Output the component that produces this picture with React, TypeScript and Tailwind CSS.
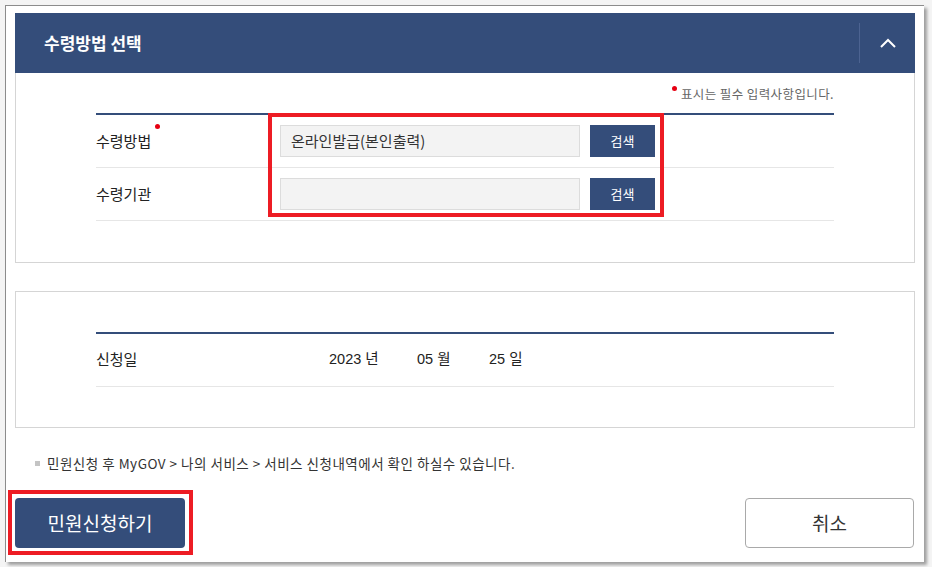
import React from 'react';

const NAVY = 'bg-[#344d7a]';

function SearchRow({ label, value, required }: { label: string; value?: string; required?: boolean }) {
  return (
    <div className="flex h-[53px] items-center border-b border-[#e6e6e6]">
      <div className="relative w-[184px] text-[15px] text-[#222]">
        <span className="relative">
          {label}
          {required && (
            <span className="absolute -right-[9px] top-[-6px] h-[5px] w-[5px] rounded-full bg-[#e60012]" />
          )}
        </span>
      </div>
      <div className="flex h-[32px] w-[300px] items-center border border-[#dcdcdc] bg-[#f3f3f3] px-[10px] text-[15px] text-[#333]">
        {value}
      </div>
      <button className={`ml-[10px] h-[32px] w-[65px] ${NAVY} text-[13px] text-white`}>검색</button>
    </div>
  );
}

export default function App() {
  return (
    <div
      className="h-[567px] w-[932px] overflow-hidden bg-[#f4f4f4] pl-[5px] pt-[5px]"
      style={{ fontFamily: '"Noto Sans CJK KR", "Liberation Sans", sans-serif' }}
    >
      <div className="relative h-[557px] w-[919px] border-l border-t border-[#8c8c8c] bg-white pl-[9px] pr-[9px] pt-[7px] shadow-[3px_3px_3px_rgba(0,0,0,0.35)]">
        {/* 수령방법 선택 */}
        <section className="w-[900px]">
          <div className={`flex h-[60px] items-center ${NAVY}`}>
            <h2 className="flex-1 pl-[29px] text-[17px] font-bold text-white">수령방법 선택</h2>
            <div className="flex h-[40px] w-[56px] items-center justify-center border-l border-[#4c6391]">
              <svg width="18" height="12" viewBox="0 0 18 12" fill="none">
                <path d="M2 10 L9 3 L16 10" stroke="white" strokeWidth="2" />
              </svg>
            </div>
          </div>
          <div className="relative border-x border-b border-[#d5d5d5] px-[80px] pb-[41px] pt-[11px]">
            <p className="flex h-[20px] items-center justify-end text-[12.5px] tracking-[0.4px] text-[#666]">
              <span className="relative mr-[4px] h-[5px] w-[5px] -translate-y-[6px] rounded-full bg-[#e60012]" />
              표시는 필수 입력사항입니다.
            </p>
            <div className="mt-[9px] border-t-2 border-[#344d7a]">
              <SearchRow label="수령방법" value="온라인발급(본인출력)" required />
              <SearchRow label="수령기관" />
            </div>
            <div className="pointer-events-none absolute left-[252px] top-[40px] h-[104px] w-[396px] border-4 border-[#ed1c24]" />
          </div>
        </section>

        {/* 신청일 */}
        <section className="mt-[28px] w-[900px] border border-[#d5d5d5] px-[80px] pb-[40px] pt-[40px]">
          <div className="border-t-2 border-[#344d7a]">
            <div
              className="flex h-[53px] items-center border-b border-[#e6e6e6] text-[14.5px] text-[#222]"
              style={{ fontFamily: '"Liberation Sans", "Noto Sans CJK KR", sans-serif' }}
            >
              <span className="w-[233px] text-[15px]">신청일</span>
              <span className="w-[88px]">2023 년</span>
              <span className="w-[72px]">05 월</span>
              <span>25 일</span>
            </div>
          </div>
        </section>

        <p className="mt-[25px] flex items-center pl-[20px] text-[13.5px] tracking-[0.5px] text-[#333]">
          <span className="mr-[7px] h-[5px] w-[5px] bg-[#c4c4c4]" />
          민원신청 후 MyGOV &gt; 나의 서비스 &gt; 서비스 신청내역에서 확인 하실수 있습니다.
        </p>

        <div className="mt-[25px] flex w-[900px] items-center justify-between">
          <div className="relative">
            <button className={`h-[50px] w-[170px] rounded-[4px] ${NAVY} text-[19px] text-white`}>민원신청하기</button>
            <div className="pointer-events-none absolute -left-[7px] -top-[8px] h-[65px] w-[185px] border-4 border-[#ed1c24]" />
          </div>
          <button className="mr-px h-[50px] w-[169px] rounded-[4px] border border-[#a9a9a9] bg-white text-[19px] text-[#333]">
            취소
          </button>
        </div>
      </div>
    </div>
  );
}
